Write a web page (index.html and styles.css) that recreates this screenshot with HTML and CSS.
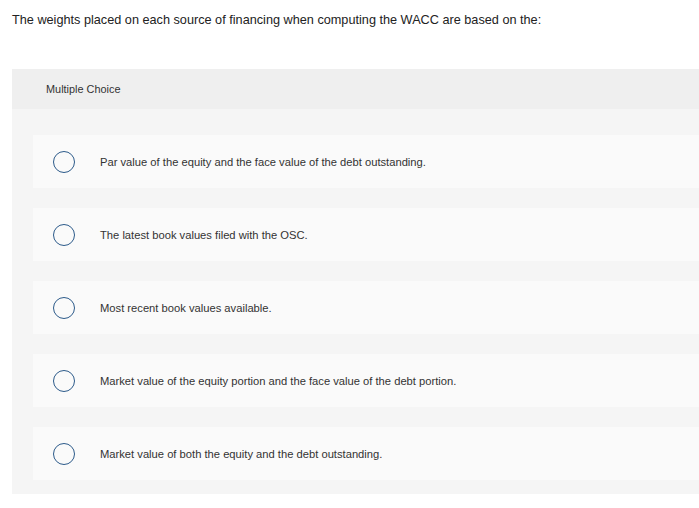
FILE: index.html
```html
<!DOCTYPE html>
<html>
<head>
<meta charset="utf-8">
<link rel="stylesheet" href="styles.css">
</head>
<body>
<p class="question">The weights placed on each source of financing when computing the WACC are based on the:</p>
<div class="panel">
  <div class="panel-head">Multiple Choice</div>
  <div class="panel-body">
    <div class="option"><span class="radio"></span><span class="label">Par value of the equity and the face value of the debt outstanding.</span></div>
    <div class="option"><span class="radio"></span><span class="label">The latest book values filed with the OSC.</span></div>
    <div class="option"><span class="radio"></span><span class="label">Most recent book values available.</span></div>
    <div class="option"><span class="radio"></span><span class="label">Market value of the equity portion and the face value of the debt portion.</span></div>
    <div class="option"><span class="radio"></span><span class="label">Market value of both the equity and the debt outstanding.</span></div>
  </div>
</div>
</body>
</html>
```
FILE: styles.css
```css
html, body { margin: 0; padding: 0; background: #fff; }
body {
  font-family: "Liberation Sans", Arial, sans-serif;
  color: #222;
  overflow: hidden;
}
.question {
  margin: 0;
  padding: 12px 0 0 12px;
  font-size: 12.7px;
  line-height: 16px;
}
.panel {
  margin: 41px 0 0 12px;
}
.panel-head {
  background: #efefef;
  height: 40px;
  box-sizing: border-box;
  padding: 13px 0 0 34px;
  font-size: 10.9px;
  line-height: 14px;
  color: #333;
}
.panel-body {
  background: #f5f5f5;
  padding: 26px 0 14px 21px;
  display: flex;
  flex-direction: column;
  gap: 20px;
}
.option {
  background: #fafafa;
  height: 53px;
  display: flex;
  align-items: center;
}
.radio {
  width: 20px;
  height: 20px;
  border: 1.5px solid #2c5a8a;
  border-radius: 50%;
  margin-left: 20px;
  flex: none;
}
.label {
  margin-left: 25px;
  font-size: 11.2px;
  color: #333;
}
```
